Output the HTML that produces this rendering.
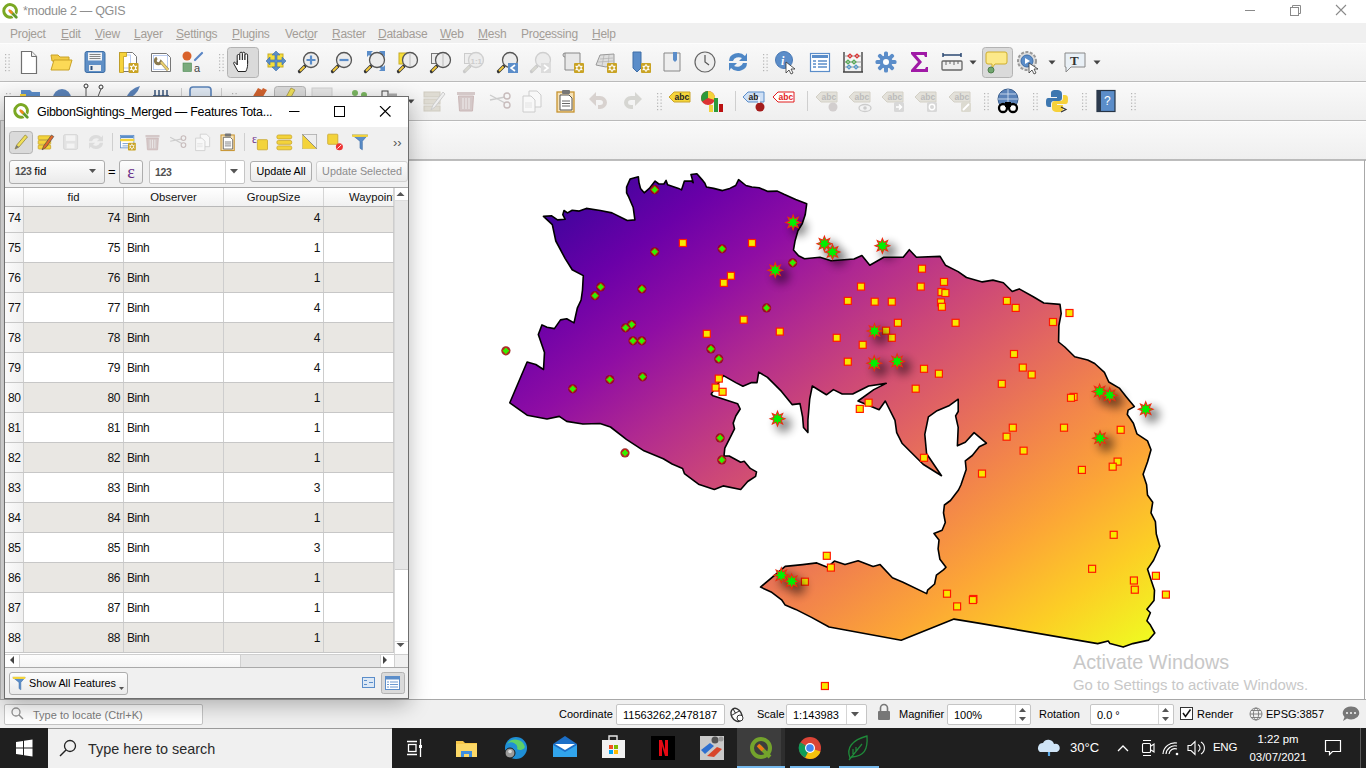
<!DOCTYPE html>
<html><head><meta charset="utf-8"><title>QGIS</title>
<style>
*{box-sizing:border-box;margin:0;padding:0}
html,body{width:1366px;height:768px;overflow:hidden;background:#fff;font-family:"Liberation Sans",sans-serif;font-size:12px;color:#000}
.abs{position:absolute}
#titlebar{position:absolute;left:0;top:0;width:1366px;height:23px;background:#fff}
#titletext{position:absolute;left:23px;top:4px;font-size:12.5px;color:#8f8f8f;white-space:nowrap;letter-spacing:-0.3px}
#menubar{position:absolute;left:0;top:23px;width:1366px;height:20px;background:#f0f0f0}
#menubar span{position:absolute;top:4px;font-size:12px;color:#a39d97;white-space:nowrap;letter-spacing:-0.25px}
#menubar u{text-decoration:underline;text-underline-offset:1px}
.tb{position:absolute;left:0;width:1366px;background:linear-gradient(#f9f9f9,#efefef);border-bottom:1px solid #bababa;border-top:1px solid #fdfdfd}
#tb1{top:43px;height:39px}
#tb2{top:82px;height:39px}
#tb3{top:121px;height:39px}
#map{position:absolute;left:0;top:160px;width:1366px;height:539px;background:#fff;overflow:hidden;border-top:1px solid #bdbdbd}
#status{position:absolute;left:0;top:699px;width:1366px;height:29px;background:#f0f0f0;border-top:1px solid #a8a8a8}
#status .lbl{position:absolute;top:8px;font-size:11px;color:#000;white-space:nowrap}
.inp{position:absolute;background:#fff;border:1px solid #c5c5c5;border-radius:2px;height:21px;font-size:11px;padding:4px 0 0 6px;white-space:nowrap}
#taskbar{position:absolute;left:0;top:728px;width:1366px;height:40px;background:#1f1f1f}
#tsearch{position:absolute;left:48px;top:0;width:344px;height:40px;background:#f0f0f0}
#tsearch span{position:absolute;left:40px;top:12.5px;font-size:14.4px;color:#2a2a2a;white-space:nowrap}
.ticon{position:absolute;top:8px;width:24px;height:24px}
.wm1{position:absolute;left:1073px;top:651px;font-size:19.8px;color:#c8c8c8;white-space:nowrap}
.wm2{position:absolute;left:1073px;top:677px;font-size:14.9px;color:#c8c8c8;white-space:nowrap}
/* dialog */
#dlgshadow{position:absolute;left:0;top:93px;width:424px;height:618px;box-shadow:0 6px 20px rgba(0,0,0,0.28);left:4px;top:96px;width:405px;height:603px}
#dlg{position:absolute;left:4px;top:96px;width:405px;height:603px;background:#f0f0f0;border:1px solid #6e6e6e;overflow:hidden}
#dlgtitle{position:absolute;left:0;top:0;width:403px;height:30px;background:#fff}
#dlgtitle .t{position:absolute;left:32px;top:8px;font-size:12.5px;color:#000;white-space:nowrap;letter-spacing:-0.29px}
#dlgtb{position:absolute;left:0;top:30px;width:403px;height:31px;background:#f0f0f0}
.btn{position:absolute;border:1px solid #adadad;border-radius:3px;background:linear-gradient(#fdfdfd,#eaeaea);font-size:10.8px;white-space:nowrap;text-align:center}
#table{position:absolute;left:0;top:90px;width:403px;height:481px;background:#fff;border-top:1px solid #a9a9a9;border-bottom:1px solid #a9a9a9;overflow:hidden}
#thead{position:absolute;left:0;top:0;width:389px;height:19px;background:linear-gradient(#ffffff,#f1f1f1);border-bottom:1px solid #b9b9b9;z-index:2}
#thead div{position:absolute;top:0;height:18px;border-right:1px solid #d5d5d5;font-size:11.3px;text-align:center;padding-top:3px;white-space:nowrap;overflow:hidden;color:#111}
.row{position:absolute;left:0;width:389px;height:30px;background:#fff;border-bottom:1px solid #c7c7c7}
.row.alt{background:#e9e7e3}
.row div{position:absolute;top:0;height:29px;border-right:1px solid #cdcdcd;font-size:12px;letter-spacing:-0.45px;padding-top:8.3px;white-space:nowrap;color:#111}
.row .vh{left:0;width:19px;background:linear-gradient(90deg,#fafafa,#f0f0f0);padding-left:3px}
.row .c1{left:19px;width:100px;text-align:right;padding-right:3px}
.row .c2{left:119px;width:100px;padding-left:3px}
.row .c3{left:219px;width:100px;text-align:right;padding-right:3px}
.row .c4{left:319px;width:70px}
#vscroll{position:absolute;left:389px;top:0;width:14px;height:466px;background:#fff;border-left:1px solid #d8d8d8;z-index:3}
#vthumb{position:absolute;left:0;top:13px;width:13px;height:369px;background:#e6e6e6;border-bottom:1px solid #cfcfcf}
#vup{position:absolute;left:0;top:0;width:13px;height:13px;background:#fff;border-bottom:1px solid #dcdcdc}
#vdown{position:absolute;left:0;top:453px;width:13px;height:13px;background:#fff;border-top:1px solid #dcdcdc}
#hscroll{position:absolute;left:0;top:466px;width:403px;height:14px;background:#e6e6e6;border-top:1px solid #cfcfcf;z-index:3}
#hthumb{position:absolute;left:14px;top:0;width:222px;height:13px;background:linear-gradient(#fdfdfd,#f3f3f3);border-right:1px solid #d0d0d0;border-left:1px solid #d0d0d0}
#hleft{position:absolute;left:0;top:0;width:14px;height:13px;background:#fff}
#hright{position:absolute;left:375px;top:0;width:14px;height:13px;background:#fff;border-left:1px solid #d0d0d0}
#hcorner{position:absolute;left:389px;top:0;width:14px;height:13px;background:#f0f0f0;border-left:1px solid #d0d0d0}
</style></head>
<body>
<div id="titlebar">
  <svg class="abs" style="left:2px;top:2.5px" width="17" height="17" viewBox="0 0 17 17"><path d="M13.2,11.6 A6.3,6.3 0 1 0 10.8,13.6" fill="none" stroke="#7aa823" stroke-width="2.9"/><path d="M8.2,8.2 L14.3,14.3" stroke="#fff" stroke-width="4.4" stroke-linecap="round"/><path d="M8.6,8.6 L14.3,14.3" stroke="#5f9a2c" stroke-width="2.8" stroke-linecap="round"/><path d="M7.6,7.6 L9.6,9.6" stroke="#f08a1c" stroke-width="2.6" stroke-linecap="round"/></svg>
  <div id="titletext">*module 2 — QGIS</div>
  <svg class="abs" style="left:1240px;top:4px" width="110" height="12" viewBox="0 0 110 12">
    <path d="M5 6.5 H15" stroke="#8a8a8a" stroke-width="1"/>
    <rect x="50.5" y="3.5" width="8" height="8" fill="none" stroke="#8a8a8a"/><path d="M52.5 3.5 V1.5 H60.5 V9.5 H58.5" fill="none" stroke="#8a8a8a"/>
    <path d="M96 1 L106 11 M106 1 L96 11" stroke="#8a8a8a" stroke-width="1.1"/>
  </svg>
</div>
<div id="menubar">
  <span style="left:10px">Pro<u>j</u>ect</span><span style="left:61px"><u>E</u>dit</span><span style="left:95px"><u>V</u>iew</span><span style="left:134px"><u>L</u>ayer</span><span style="left:176px"><u>S</u>ettings</span><span style="left:232px"><u>P</u>lugins</span><span style="left:285px">Vect<u>o</u>r</span><span style="left:332px"><u>R</u>aster</span><span style="left:378px"><u>D</u>atabase</span><span style="left:440px"><u>W</u>eb</span><span style="left:478px"><u>M</u>esh</span><span style="left:521px">Pro<u>c</u>essing</span><span style="left:592px"><u>H</u>elp</span>
</div>
<div id="tb1" class="tb"><!--TB1--></div>
<div id="tb2" class="tb"><!--TB2--></div>
<div id="tb3" class="tb"></div>
<svg width="1366" height="160" style="position:absolute;left:0;top:0"><rect x="5" y="54" width="1.2" height="1.2" fill="#b5b5b5"/><rect x="8.5" y="54" width="1.2" height="1.2" fill="#b5b5b5"/><rect x="5" y="57.2" width="1.2" height="1.2" fill="#b5b5b5"/><rect x="8.5" y="57.2" width="1.2" height="1.2" fill="#b5b5b5"/><rect x="5" y="60.4" width="1.2" height="1.2" fill="#b5b5b5"/><rect x="8.5" y="60.4" width="1.2" height="1.2" fill="#b5b5b5"/><rect x="5" y="63.6" width="1.2" height="1.2" fill="#b5b5b5"/><rect x="8.5" y="63.6" width="1.2" height="1.2" fill="#b5b5b5"/><rect x="5" y="66.8" width="1.2" height="1.2" fill="#b5b5b5"/><rect x="8.5" y="66.8" width="1.2" height="1.2" fill="#b5b5b5"/><rect x="5" y="70" width="1.2" height="1.2" fill="#b5b5b5"/><rect x="8.5" y="70" width="1.2" height="1.2" fill="#b5b5b5"/><g transform="translate(17,50)"><path d="M4.5,1.5 h10 l5,5 v17 h-15z" fill="#fff" stroke="#707070" stroke-width="1.2"/><path d="M14.5,1.5 v5 h5" fill="#eee" stroke="#707070"/></g><g transform="translate(49.5,50)"><path d="M1.5,5 h7 l2,2 h9 v4 h-17z" fill="#f2cb45" stroke="#c9a227"/><path d="M1.5,20 l3,-10 h18 l-3,10z" fill="#fcd956" stroke="#c9a227"/></g><g transform="translate(83,50)"><rect x="2" y="1.5" width="20" height="21" rx="2" fill="#5f8fc6" stroke="#3d6ea5"/><rect x="5" y="2.5" width="14" height="8" fill="#f2f4f6"/><path d="M6.5,4.5 h11 M6.5,6.5 h11 M6.5,8.5 h11" stroke="#555" stroke-width="0.7"/><rect x="6" y="15" width="12" height="6" fill="#eee"/><rect x="7.5" y="16" width="2" height="4" fill="#2d4f7a"/></g><g transform="translate(116,50)"><path d="M3.5,2.5 h13 l4,4 v15 h-17z" fill="#fff" stroke="#777"/><rect x="5.5" y="5" width="9" height="13" fill="#fff" stroke="#aac0ee" stroke-width="0.8"/><path d="M3.5,2.5 h7 v4 h-3 v16 h-4z" fill="#f6d33b" stroke="#c29c1c" stroke-width="0.8"/><rect x="12.5" y="13" width="10" height="10" rx="1" fill="#c9a324"/><path d="M17.5,14 v8 M14.05,16 l6.9,4 M20.95,16 l-6.9,4" stroke="#fff" stroke-width="1.1"/><circle cx="17.5" cy="18" r="2.2" fill="#c9a324" stroke="#fff" stroke-width="1.1"/></g><g transform="translate(149,50)"><path d="M2.5,3.5 h15 l4,4 v14 h-19z" fill="#fff" stroke="#777"/><rect x="4.5" y="5.5" width="14" height="14" fill="none" stroke="#aac0ee" stroke-width="0.8"/><path d="M8,8 a3,3 0 1 0 4,4 l7,8" fill="none" stroke="#8a7a50" stroke-width="3"/><path d="M12,12 l7,8" stroke="#e8cf70" stroke-width="2"/></g><g transform="translate(181,50)"><circle cx="6" cy="6" r="4.5" fill="#d9622b"/><path d="M14,10 L21,3" stroke="#5a86c5" stroke-width="2.2" stroke-linecap="round"/><rect x="2" y="13" width="8.5" height="8.5" fill="#7aaa7c" stroke="#4c8a53" stroke-width="0.6"/><text x="13" y="21.5" font-family="Liberation Sans" font-size="11" fill="#444">a</text></g><rect x="219" y="54" width="1.2" height="1.2" fill="#b5b5b5"/><rect x="222.5" y="54" width="1.2" height="1.2" fill="#b5b5b5"/><rect x="219" y="57.2" width="1.2" height="1.2" fill="#b5b5b5"/><rect x="222.5" y="57.2" width="1.2" height="1.2" fill="#b5b5b5"/><rect x="219" y="60.4" width="1.2" height="1.2" fill="#b5b5b5"/><rect x="222.5" y="60.4" width="1.2" height="1.2" fill="#b5b5b5"/><rect x="219" y="63.6" width="1.2" height="1.2" fill="#b5b5b5"/><rect x="222.5" y="63.6" width="1.2" height="1.2" fill="#b5b5b5"/><rect x="219" y="66.8" width="1.2" height="1.2" fill="#b5b5b5"/><rect x="222.5" y="66.8" width="1.2" height="1.2" fill="#b5b5b5"/><rect x="219" y="70" width="1.2" height="1.2" fill="#b5b5b5"/><rect x="222.5" y="70" width="1.2" height="1.2" fill="#b5b5b5"/><rect x="227.5" y="47.5" width="31" height="30" rx="3" fill="#dadada" stroke="#b3b3b3"/><g transform="translate(231,50)"><rect x="6.2" y="4.5" width="2.6" height="11" rx="1.3" fill="#fff" stroke="#222" stroke-width="1"/><rect x="8.8" y="2.2" width="2.6" height="12" rx="1.3" fill="#fff" stroke="#222" stroke-width="1"/><rect x="11.4" y="2.2" width="2.6" height="12" rx="1.3" fill="#fff" stroke="#222" stroke-width="1"/><rect x="14" y="3.8" width="2.6" height="10.5" rx="1.3" fill="#fff" stroke="#222" stroke-width="1"/><path d="M6.3,11 V15 L4.5,12.8 C3.5,11.6 2,12.3 2.8,13.8 L7,21.5 H14.8 C16,19 16.6,17 16.6,14.5 V11z" fill="#fff" stroke="#222" stroke-width="1" stroke-linejoin="round"/><rect x="7" y="10" width="9" height="5" fill="#fff"/></g><g transform="translate(264,50)"><rect x="4" y="4" width="15" height="13" fill="#f6de3a" stroke="#c8ac25"/><path d="M12,1 l4,4 h-3 v5 h5 v-3 l4,4 -4,4 v-3 h-5 v5 h3 l-4,4 -4,-4 h3 v-5 h-5 v3 l-4,-4 4,-4 v3 h5 v-5 h-3z" fill="#5b8dc9" stroke="#3e6ea8" stroke-width="0.6"/></g><g transform="translate(297,50)"><path d="M2.5,21.5 L8,16" stroke="#333" stroke-width="3.2" stroke-linecap="round"/><path d="M3,21 L7.5,16.5" stroke="#f3c93a" stroke-width="1.8"/><circle cx="14" cy="10" r="7.5" fill="#ececec" stroke="#555" stroke-width="1.3"/><path d="M14,5.5 v9 M9.5,10 h9" stroke="#5b8dc9" stroke-width="2.2"/></g><g transform="translate(330,50)"><path d="M2.5,21.5 L8,16" stroke="#333" stroke-width="3.2" stroke-linecap="round"/><path d="M3,21 L7.5,16.5" stroke="#f3c93a" stroke-width="1.8"/><circle cx="14" cy="10" r="7.5" fill="#ececec" stroke="#555" stroke-width="1.3"/><path d="M9.5,10 h9" stroke="#5b8dc9" stroke-width="2.2"/></g><g transform="translate(363,50)"><path d="M4,1 h6 l-2,2 3,3 -2,2 -3,-3 -2,2z M22,1 h-6 l2,2 -3,3 2,2 3,-3 2,2z M22,21 h-6 l2,-2 -3,-3 2,-2 3,3 2,-2z" fill="#5b8dc9"/><path d="M2.5,21.5 L8,16" stroke="#333" stroke-width="3.2" stroke-linecap="round"/><path d="M3,21 L7.5,16.5" stroke="#f3c93a" stroke-width="1.8"/><circle cx="14" cy="10" r="7.5" fill="#ececec" stroke="#555" stroke-width="1.3"/></g><g transform="translate(396,50)"><rect x="3" y="3" width="9" height="11" fill="#f6de3a" stroke="#c8ac25"/><path d="M2.5,21.5 L8,16" stroke="#333" stroke-width="3.2" stroke-linecap="round"/><path d="M3,21 L7.5,16.5" stroke="#f3c93a" stroke-width="1.8"/><circle cx="14" cy="10" r="7.5" fill="#ececec" stroke="#555" stroke-width="1.3"/><path d="M14,3 v14" stroke="#bbb"/></g><g transform="translate(429,50)"><rect x="2.5" y="3.5" width="9" height="10" fill="#eee" stroke="#777"/><path d="M2.5,21.5 L8,16" stroke="#333" stroke-width="3.2" stroke-linecap="round"/><path d="M3,21 L7.5,16.5" stroke="#f3c93a" stroke-width="1.8"/><circle cx="14" cy="10" r="7.5" fill="#ececec" stroke="#555" stroke-width="1.3"/><path d="M14,3 v14" stroke="#bbb"/></g><g transform="translate(462,50)"><rect x="2.5" y="3.5" width="9" height="10" fill="#eee" stroke="#ccc"/><path d="M2.5,21.5 L8,16" stroke="#c9c9c9" stroke-width="3.2" stroke-linecap="round"/><path d="M3,21 L7.5,16.5" stroke="#d8d8d0" stroke-width="1.8"/><circle cx="14" cy="10" r="7.5" fill="#ececec" stroke="#cfcfcf" stroke-width="1.3"/><text x="8.5" y="13.5" font-size="8" font-family="Liberation Sans" font-weight="bold" fill="#ccc">1:1</text></g><g transform="translate(496,50)"><path d="M2.5,21.5 L8,16" stroke="#333" stroke-width="3.2" stroke-linecap="round"/><path d="M3,21 L7.5,16.5" stroke="#f3c93a" stroke-width="1.8"/><circle cx="14" cy="10" r="7.5" fill="#ececec" stroke="#555" stroke-width="1.3"/><rect x="12" y="13" width="10" height="10" fill="#5b8dc9"/><path d="M19,15 l-4,3 4,3" fill="none" stroke="#fff" stroke-width="1.6"/></g><g transform="translate(529,50)"><path d="M2.5,21.5 L8,16" stroke="#c9c9c9" stroke-width="3.2" stroke-linecap="round"/><path d="M3,21 L7.5,16.5" stroke="#d8d8d0" stroke-width="1.8"/><circle cx="14" cy="10" r="7.5" fill="#ececec" stroke="#cfcfcf" stroke-width="1.3"/><rect x="12" y="13" width="10" height="10" fill="#dcdcdc"/><path d="M15,15 l4,3 -4,3" fill="none" stroke="#fff" stroke-width="1.6"/></g><g transform="translate(561,50)"><path d="M4,3 h15 v17 h-15z" fill="#e8e8e8" stroke="#888"/><path d="M4,3 a2,2 0 0 0 0,4" fill="none" stroke="#888"/><rect x="13" y="13" width="10" height="10" rx="1" fill="#c9a324"/><path d="M18,14 v8 M14.55,16 l6.9,4 M21.45,16 l-6.9,4" stroke="#fff" stroke-width="1.1"/><circle cx="18" cy="18" r="2.2" fill="#c9a324" stroke="#fff" stroke-width="1.1"/></g><g transform="translate(594,50)"><path d="M2,15 L6,5 L20,4 L20,14 L12,17z" fill="#dedede" stroke="#999"/><path d="M6,9 l13,-1 M4,12 l15,-1 M10,5 l-2,11 M15,5 l-1,11" stroke="#aaa" stroke-width="0.6"/><rect x="13" y="13" width="10" height="10" rx="1" fill="#c9a324"/><path d="M18,14 v8 M14.55,16 l6.9,4 M21.45,16 l-6.9,4" stroke="#fff" stroke-width="1.1"/><circle cx="18" cy="18" r="2.2" fill="#c9a324" stroke="#fff" stroke-width="1.1"/></g><g transform="translate(628,50)"><path d="M5,2 h8 v16 l-4,4 -4,-4z" fill="#5b8dc9" stroke="#3e6ea8"/><rect x="13" y="13" width="10" height="10" rx="1" fill="#c9a324"/><path d="M18,14 v8 M14.55,16 l6.9,4 M21.45,16 l-6.9,4" stroke="#fff" stroke-width="1.1"/><circle cx="18" cy="18" r="2.2" fill="#c9a324" stroke="#fff" stroke-width="1.1"/></g><g transform="translate(660,50)"><path d="M4,3 h16 v18 h-16z" fill="#eee" stroke="#888"/><path d="M13,2 h4 v8 l-2,2 -2,-2z" fill="#5b8dc9"/></g><g transform="translate(693,50)"><circle cx="12" cy="12" r="10" fill="#eee" stroke="#666" stroke-width="1.2"/><path d="M12,5 v7 l4,3" fill="none" stroke="#555" stroke-width="1.2"/></g><g transform="translate(726,50)"><path d="M3,11 A9,8 0 0 1 19,6 L21,3 V11 H13 L16,8 A6,5 0 0 0 7,11z M21,13 A9,8 0 0 1 5,18 L3,21 V13 H11 L8,16 A6,5 0 0 0 17,13z" fill="#4e87c6"/></g><rect x="763" y="54" width="1.2" height="1.2" fill="#b5b5b5"/><rect x="766.5" y="54" width="1.2" height="1.2" fill="#b5b5b5"/><rect x="763" y="57.2" width="1.2" height="1.2" fill="#b5b5b5"/><rect x="766.5" y="57.2" width="1.2" height="1.2" fill="#b5b5b5"/><rect x="763" y="60.4" width="1.2" height="1.2" fill="#b5b5b5"/><rect x="766.5" y="60.4" width="1.2" height="1.2" fill="#b5b5b5"/><rect x="763" y="63.6" width="1.2" height="1.2" fill="#b5b5b5"/><rect x="766.5" y="63.6" width="1.2" height="1.2" fill="#b5b5b5"/><rect x="763" y="66.8" width="1.2" height="1.2" fill="#b5b5b5"/><rect x="766.5" y="66.8" width="1.2" height="1.2" fill="#b5b5b5"/><rect x="763" y="70" width="1.2" height="1.2" fill="#b5b5b5"/><rect x="766.5" y="70" width="1.2" height="1.2" fill="#b5b5b5"/><g transform="translate(774,50)"><circle cx="10" cy="10" r="8.5" fill="#5b8dc9" stroke="#4a7ab5"/><text x="7" y="15" font-family="Liberation Serif" font-style="italic" font-weight="bold" font-size="12" fill="#fff">i</text><path d="M12,12 v11 l3,-3 2,4 2,-1 -2,-4 h4z" fill="#fff" stroke="#333" stroke-width="0.8"/></g><g transform="translate(808,50)"><rect x="2.5" y="3.5" width="19" height="18" fill="#fff" stroke="#5b8dc9" stroke-width="1.2"/><rect x="4" y="5" width="16" height="3" fill="#5b8dc9"/><path d="M5,11 h3 M10,11 h9 M5,14 h3 M10,14 h9 M5,17 h3 M10,17 h9" stroke="#5b8dc9" stroke-width="1.3"/></g><g transform="translate(841,50)"><path d="M3,2 v20 M21,2 v20 M2,22 h20" stroke="#444" stroke-width="1.4"/><path d="M3,6 h18 M3,12 h18 M3,17 h18" stroke="#888" stroke-width="0.8"/><g fill="none" stroke-width="1.2"><path d="M7,6 l2,-2 2,2 -2,2z M14,6 l2,-2 2,2 -2,2z" stroke="#d33"/><path d="M5,12 l2,-2 2,2 -2,2z M11,12 l2,-2 2,2 -2,2z" stroke="#5a5"/><path d="M6,17 l2,-2 2,2 -2,2z M13,17 l2,-2 2,2 -2,2z" stroke="#59c"/></g></g><g transform="translate(874,50)"><g fill="#5b8dc9"><circle cx="12" cy="12" r="6.5"/><rect x="10" y="1.5" width="4" height="21" rx="1.5"/><rect x="1.5" y="10" width="21" height="4" rx="1.5"/><rect x="10" y="1.5" width="4" height="21" rx="1.5" transform="rotate(45 12 12)"/><rect x="10" y="1.5" width="4" height="21" rx="1.5" transform="rotate(-45 12 12)"/></g><circle cx="12" cy="12" r="3" fill="#fff"/></g><g transform="translate(907,50)"><path d="M4,2 h16 v5 h-2 l-1,-2 h-8 l6,7 -6,7 h9 l1,-2 h2 v5 h-17 v-2 l7,-8 -7,-8z" fill="#a01aa6"/></g><g transform="translate(940,50)"><path d="M3,5 h18 M3,3 v4 M21,3 v4" stroke="#2c4a73" stroke-width="1.5"/><rect x="2" y="11" width="20" height="9" rx="1" fill="#eee" stroke="#666" stroke-width="1.3"/><path d="M6,11 v4 M10,11 v3 M14,11 v4 M18,11 v3" stroke="#666"/></g><path d="M969.5,60.5 h7 l-3.5,4z" fill="#444"/><rect x="982.5" y="47.5" width="30" height="30" rx="3" fill="#dadada" stroke="#b3b3b3"/><g transform="translate(985,50)"><path d="M3,2 h17 a2,2 0 0 1 2,2 v8 a2,2 0 0 1 -2,2 h-10 l-3,4 v-4 h-4 a2,2 0 0 1 -2,-2 v-8 a2,2 0 0 1 2,-2z" fill="#fce98a" stroke="#cfae2c"/><circle cx="6" cy="20" r="3" fill="#72a66f" stroke="#4d7f4b"/></g><g transform="translate(1016,50)"><circle cx="11" cy="11" r="9" fill="#ddd" stroke="#999" stroke-dasharray="3 1.5" stroke-width="2"/><circle cx="11" cy="11" r="6" fill="#5b8dc9" stroke="#3e6ea8"/><path d="M9,8 l5,3 -5,3z" fill="#fff"/><path d="M13,13 v10 l3,-3 2,4 2,-1 -2,-4 h4z" fill="#fff" stroke="#333" stroke-width="0.8"/></g><path d="M1048.5,60.5 h7 l-3.5,4z" fill="#444"/><g transform="translate(1063,50)"><path d="M2,3 h20 v14 h-14 l-5,5 v-5 h-1z" fill="#e9f0f6" stroke="#888"/><text x="7" y="14.5" font-family="Liberation Serif" font-weight="bold" font-size="13" fill="#333">T</text></g><path d="M1093.5,60.5 h7 l-3.5,4z" fill="#444"/><rect x="6" y="93" width="1.2" height="1.2" fill="#b5b5b5"/><rect x="9.5" y="93" width="1.2" height="1.2" fill="#b5b5b5"/><rect x="6" y="96.2" width="1.2" height="1.2" fill="#b5b5b5"/><rect x="9.5" y="96.2" width="1.2" height="1.2" fill="#b5b5b5"/><rect x="6" y="99.4" width="1.2" height="1.2" fill="#b5b5b5"/><rect x="9.5" y="99.4" width="1.2" height="1.2" fill="#b5b5b5"/><rect x="6" y="102.6" width="1.2" height="1.2" fill="#b5b5b5"/><rect x="9.5" y="102.6" width="1.2" height="1.2" fill="#b5b5b5"/><rect x="6" y="105.8" width="1.2" height="1.2" fill="#b5b5b5"/><rect x="9.5" y="105.8" width="1.2" height="1.2" fill="#b5b5b5"/><rect x="6" y="109" width="1.2" height="1.2" fill="#b5b5b5"/><rect x="9.5" y="109" width="1.2" height="1.2" fill="#b5b5b5"/><path d="M21,90 h9 l2,2 h8 v12 h-19z" fill="#5b8dc9"/><rect x="20" y="94" width="6" height="8" fill="#f3d33a"/><circle cx="62" cy="98" r="9" fill="#5a82b8"/><circle cx="86" cy="86" r="2" fill="none" stroke="#333"/><circle cx="101" cy="87" r="2" fill="none" stroke="#333"/><path d="M86,88 v10 M101,89 l-4,10" stroke="#555"/><path d="M125,100 q5,-12 15,-14 q-3,10 -15,14z" fill="#5a82b8"/><path d="M153,96 h16 M155,90 v6 M159,90 v6 M163,90 v6 M167,90 v6" stroke="#2c4a73" stroke-width="1.4"/><rect x="181" y="88" width="1" height="26" fill="#cfcfcf"/><rect x="190" y="87" width="21" height="12" rx="3" fill="#dfe8f3" stroke="#5a82b8" stroke-width="1.6"/><rect x="221" y="88" width="1" height="26" fill="#cfcfcf"/><rect x="232" y="93" width="1.2" height="1.2" fill="#b5b5b5"/><rect x="235.5" y="93" width="1.2" height="1.2" fill="#b5b5b5"/><rect x="232" y="96.2" width="1.2" height="1.2" fill="#b5b5b5"/><rect x="235.5" y="96.2" width="1.2" height="1.2" fill="#b5b5b5"/><rect x="232" y="99.4" width="1.2" height="1.2" fill="#b5b5b5"/><rect x="235.5" y="99.4" width="1.2" height="1.2" fill="#b5b5b5"/><rect x="232" y="102.6" width="1.2" height="1.2" fill="#b5b5b5"/><rect x="235.5" y="102.6" width="1.2" height="1.2" fill="#b5b5b5"/><rect x="232" y="105.8" width="1.2" height="1.2" fill="#b5b5b5"/><rect x="235.5" y="105.8" width="1.2" height="1.2" fill="#b5b5b5"/><rect x="232" y="109" width="1.2" height="1.2" fill="#b5b5b5"/><rect x="235.5" y="109" width="1.2" height="1.2" fill="#b5b5b5"/><path d="M252,98 l6,-10 4,2 -6,10z M257,98 l6,-10 4,2 -6,10z" fill="#d2632f"/><rect x="274.5" y="86.5" width="31" height="29" rx="3" fill="#dadada" stroke="#b3b3b3"/><path d="M286,97 l5,-9 4,2 -5,9z" fill="#f0e05a" stroke="#9a8a40" stroke-width="0.7"/><rect x="312" y="88" width="20" height="10" fill="#e6e6e6" stroke="#d0d0d0"/><circle cx="355" cy="93" r="3" fill="#7bb661"/><circle cx="364" cy="95" r="3" fill="#7bb661"/><rect x="382" y="91" width="6" height="6" fill="none" stroke="#444"/><path d="M389,95 h8" stroke="#aaa" stroke-width="3"/><path d="M407.5,99.5 h7 l-3.5,4z" fill="#444"/><g transform="translate(422,89)"><rect x="2" y="3" width="16" height="5" fill="#dedbd2" stroke="#cfcbc0"/><rect x="2" y="10" width="16" height="5" fill="#dedbd2" stroke="#cfcbc0"/><rect x="2" y="17" width="16" height="5" fill="#dedbd2" stroke="#cfcbc0"/><path d="M9,21 l2,-5 10,-13 2,2 -10,13z" fill="#eee" stroke="#ccc"/></g><g transform="translate(454,89)"><rect x="3" y="3" width="18" height="3" fill="#d4c8c8"/><path d="M4.5,7 h15 l-1,15 h-13z" fill="#d4c8c8" stroke="#cbb7b7"/><path d="M9,9 v11 M12,9 v11 M15,9 v11" stroke="#f0eeee"/></g><g transform="translate(488,89)"><path d="M2,6 L17,14 M2,11 L17,8" stroke="#ccc" stroke-width="1.4"/><circle cx="19" cy="7" r="3" fill="none" stroke="#c8bcbc" stroke-width="1.4"/><circle cx="19" cy="16" r="3" fill="none" stroke="#c8bcbc" stroke-width="1.4"/></g><g transform="translate(520,89)"><path d="M9,2 h8 l4,4 v12 h-12z" fill="#f8f8f8" stroke="#ccc"/><path d="M3,7 h8 l4,4 v12 h-12z" fill="#f8f8f8" stroke="#ccc"/><path d="M5,14 h7 M5,16 h7 M5,18 h7" stroke="#ddd" stroke-width="0.8"/></g><g transform="translate(554,89)"><rect x="3" y="3" width="17" height="20" fill="#f6e2b7" stroke="#c6932f" stroke-width="1.3"/><rect x="8" y="1" width="8" height="4" rx="1" fill="#777"/><path d="M6,6 h9 l3,3 v12 h-12z" fill="#fff" stroke="#555"/><path d="M8,12 h8 M8,14.5 h8 M8,17 h8" stroke="#555" stroke-width="0.9"/></g><g transform="translate(587,89)"><path d="M2,10 L9,3 V7 H13 A7,6.5 0 0 1 13,20 H11 V16 H13 A3,2.5 0 0 0 13,11 H9 V17z" fill="#d8d2cf"/></g><g transform="translate(620,89)"><path d="M22,10 L15,3 V7 H11 A7,6.5 0 0 0 11,20 H13 V16 H11 A3,2.5 0 0 1 11,11 H15 V17z" fill="#d6d6d2"/></g><rect x="657" y="93" width="1.2" height="1.2" fill="#b5b5b5"/><rect x="660.5" y="93" width="1.2" height="1.2" fill="#b5b5b5"/><rect x="657" y="96.2" width="1.2" height="1.2" fill="#b5b5b5"/><rect x="660.5" y="96.2" width="1.2" height="1.2" fill="#b5b5b5"/><rect x="657" y="99.4" width="1.2" height="1.2" fill="#b5b5b5"/><rect x="660.5" y="99.4" width="1.2" height="1.2" fill="#b5b5b5"/><rect x="657" y="102.6" width="1.2" height="1.2" fill="#b5b5b5"/><rect x="660.5" y="102.6" width="1.2" height="1.2" fill="#b5b5b5"/><rect x="657" y="105.8" width="1.2" height="1.2" fill="#b5b5b5"/><rect x="660.5" y="105.8" width="1.2" height="1.2" fill="#b5b5b5"/><rect x="657" y="109" width="1.2" height="1.2" fill="#b5b5b5"/><rect x="660.5" y="109" width="1.2" height="1.2" fill="#b5b5b5"/><g transform="translate(668,89)"><path d="M1,8 l5,-5 h16 v10 h-16z" fill="#f6d53a" stroke="#c9a42a"/><text x="6.5" y="11" font-family="Liberation Sans" font-weight="bold" font-size="8.5" fill="#222">abc</text></g><g transform="translate(700,89)"><circle cx="8" cy="9" r="7" fill="#d33"/><path d="M8,9 L8,2 A7,7 0 0 1 14.7,11z" fill="#f3d33a"/><path d="M8,9 L2,12.5 A7,7 0 0 1 8,2z" fill="#2e9a3a"/><rect x="9" y="16" width="4" height="7" fill="#f3d33a"/><rect x="14" y="9" width="4" height="14" fill="#2e9a3a"/><rect x="19" y="15" width="4" height="8" fill="#b11"/></g><rect x="735" y="91" width="1" height="20" fill="#cfcfcf"/><g transform="translate(742,89)"><path d="M1,8 l5,-5 h16 v10 h-16z" fill="#cfe0f5" stroke="#5b8dc9"/><text x="6.5" y="11" font-family="Liberation Sans" font-weight="bold" font-size="8.5" fill="#222">ab</text><circle cx="18" cy="18" r="4.5" fill="#a41c1c"/><path d="M17,14 v-6" stroke="#fff" stroke-width="1.5"/></g><g transform="translate(772,89)"><path d="M1,8 l5,-5 h16 v10 h-16z" fill="#fff" stroke="#e21d1d"/><text x="6.5" y="11" font-family="Liberation Sans" font-weight="bold" font-size="8.5" fill="#e21d1d">abc</text></g><rect x="807" y="91" width="1" height="20" fill="#cfcfcf"/><g transform="translate(815,89)"><path d="M1,8 l5,-5 h16 v10 h-16z" fill="#e3e1da" stroke="#d3d0c6"/><text x="6.5" y="11" font-family="Liberation Sans" font-weight="bold" font-size="8.5" fill="#bbb">abc</text><circle cx="18" cy="18" r="4.5" fill="#d2cece"/></g><g transform="translate(848,89)"><path d="M1,8 l5,-5 h16 v10 h-16z" fill="#e3e1da" stroke="#d3d0c6"/><text x="6.5" y="11" font-family="Liberation Sans" font-weight="bold" font-size="8.5" fill="#bbb">abc</text><ellipse cx="17" cy="19" rx="6" ry="3.5" fill="none" stroke="#ccc" stroke-width="1.3"/><circle cx="17" cy="19" r="1.8" fill="#ccc"/></g><g transform="translate(881,89)"><path d="M1,8 l5,-5 h16 v10 h-16z" fill="#e3e1da" stroke="#d3d0c6"/><text x="6.5" y="11" font-family="Liberation Sans" font-weight="bold" font-size="8.5" fill="#bbb">abc</text><rect x="13" y="13" width="10" height="10" rx="1.5" fill="#d8d8d8"/><path d="M15,18 h5 M18,15.5 l2.5,2.5 -2.5,2.5" stroke="#fff" stroke-width="1.5" fill="none"/></g><g transform="translate(914,89)"><path d="M1,8 l5,-5 h16 v10 h-16z" fill="#e3e1da" stroke="#d3d0c6"/><text x="6.5" y="11" font-family="Liberation Sans" font-weight="bold" font-size="8.5" fill="#bbb">abc</text><rect x="13" y="13" width="10" height="10" rx="1.5" fill="#d8d8d8"/><circle cx="18" cy="18" r="2.7" fill="none" stroke="#fff" stroke-width="1.4"/></g><g transform="translate(948,89)"><path d="M1,8 l5,-5 h16 v10 h-16z" fill="#e3e1da" stroke="#d3d0c6"/><text x="6.5" y="11" font-family="Liberation Sans" font-weight="bold" font-size="8.5" fill="#bbb">abc</text><rect x="13" y="13" width="10" height="10" rx="1.5" fill="#dcdad0"/><path d="M15,21 l6,-6" stroke="#fff" stroke-width="1.8"/></g><rect x="984" y="93" width="1.2" height="1.2" fill="#b5b5b5"/><rect x="987.5" y="93" width="1.2" height="1.2" fill="#b5b5b5"/><rect x="984" y="96.2" width="1.2" height="1.2" fill="#b5b5b5"/><rect x="987.5" y="96.2" width="1.2" height="1.2" fill="#b5b5b5"/><rect x="984" y="99.4" width="1.2" height="1.2" fill="#b5b5b5"/><rect x="987.5" y="99.4" width="1.2" height="1.2" fill="#b5b5b5"/><rect x="984" y="102.6" width="1.2" height="1.2" fill="#b5b5b5"/><rect x="987.5" y="102.6" width="1.2" height="1.2" fill="#b5b5b5"/><rect x="984" y="105.8" width="1.2" height="1.2" fill="#b5b5b5"/><rect x="987.5" y="105.8" width="1.2" height="1.2" fill="#b5b5b5"/><rect x="984" y="109" width="1.2" height="1.2" fill="#b5b5b5"/><rect x="987.5" y="109" width="1.2" height="1.2" fill="#b5b5b5"/><g transform="translate(996,89)"><circle cx="12" cy="10" r="10" fill="#5a82b8" stroke="#3b5f8e"/><path d="M2,10 h20 M12,0 v20 M4,5 h16 M4,15 h16" stroke="#cfdcee" stroke-width="0.9"/><circle cx="7" cy="19" r="4" fill="#fff" stroke="#000" stroke-width="2.3"/><circle cx="17" cy="19" r="4" fill="#fff" stroke="#000" stroke-width="2.3"/><rect x="9" y="13" width="6" height="5" fill="#000"/></g><rect x="1033" y="93" width="1.2" height="1.2" fill="#b5b5b5"/><rect x="1036.5" y="93" width="1.2" height="1.2" fill="#b5b5b5"/><rect x="1033" y="96.2" width="1.2" height="1.2" fill="#b5b5b5"/><rect x="1036.5" y="96.2" width="1.2" height="1.2" fill="#b5b5b5"/><rect x="1033" y="99.4" width="1.2" height="1.2" fill="#b5b5b5"/><rect x="1036.5" y="99.4" width="1.2" height="1.2" fill="#b5b5b5"/><rect x="1033" y="102.6" width="1.2" height="1.2" fill="#b5b5b5"/><rect x="1036.5" y="102.6" width="1.2" height="1.2" fill="#b5b5b5"/><rect x="1033" y="105.8" width="1.2" height="1.2" fill="#b5b5b5"/><rect x="1036.5" y="105.8" width="1.2" height="1.2" fill="#b5b5b5"/><rect x="1033" y="109" width="1.2" height="1.2" fill="#b5b5b5"/><rect x="1036.5" y="109" width="1.2" height="1.2" fill="#b5b5b5"/><g transform="translate(1045,89)"><path d="M11,1 C6,1 6,3 6,5 V8 H12 V9 H3 C1,9 1,12 1,14 C1,17 2,18 4,18 H6 V15 C6,13 7,12 9,12 H14 C16,12 17,11 17,9 V5 C17,3 16,1 11,1z" fill="#3d77b0"/><path d="M13,23 C18,23 18,21 18,19 V16 H12 V15 H21 C23,15 23,12 23,10 C23,7 22,6 20,6 H18 V9 C18,11 17,12 15,12 H10 C8,12 7,13 7,15 V19 C7,21 8,23 13,23z" fill="#f6d13a"/><path d="M16,18 l5,2.5 -5,2.5" fill="none" stroke="#333" stroke-width="1.2"/></g><rect x="1082" y="93" width="1.2" height="1.2" fill="#b5b5b5"/><rect x="1085.5" y="93" width="1.2" height="1.2" fill="#b5b5b5"/><rect x="1082" y="96.2" width="1.2" height="1.2" fill="#b5b5b5"/><rect x="1085.5" y="96.2" width="1.2" height="1.2" fill="#b5b5b5"/><rect x="1082" y="99.4" width="1.2" height="1.2" fill="#b5b5b5"/><rect x="1085.5" y="99.4" width="1.2" height="1.2" fill="#b5b5b5"/><rect x="1082" y="102.6" width="1.2" height="1.2" fill="#b5b5b5"/><rect x="1085.5" y="102.6" width="1.2" height="1.2" fill="#b5b5b5"/><rect x="1082" y="105.8" width="1.2" height="1.2" fill="#b5b5b5"/><rect x="1085.5" y="105.8" width="1.2" height="1.2" fill="#b5b5b5"/><rect x="1082" y="109" width="1.2" height="1.2" fill="#b5b5b5"/><rect x="1085.5" y="109" width="1.2" height="1.2" fill="#b5b5b5"/><g transform="translate(1094,89)"><rect x="3" y="1.5" width="18" height="21" fill="#5b8dc9" stroke="#263445" stroke-width="1.2"/><rect x="3" y="1.5" width="4" height="21" fill="#2c3a4d"/><text x="10" y="16" font-family="Liberation Sans" font-size="12" fill="#fff">?</text></g><rect x="1131" y="93" width="1.2" height="1.2" fill="#b5b5b5"/><rect x="1134.5" y="93" width="1.2" height="1.2" fill="#b5b5b5"/><rect x="1131" y="96.2" width="1.2" height="1.2" fill="#b5b5b5"/><rect x="1134.5" y="96.2" width="1.2" height="1.2" fill="#b5b5b5"/><rect x="1131" y="99.4" width="1.2" height="1.2" fill="#b5b5b5"/><rect x="1134.5" y="99.4" width="1.2" height="1.2" fill="#b5b5b5"/><rect x="1131" y="102.6" width="1.2" height="1.2" fill="#b5b5b5"/><rect x="1134.5" y="102.6" width="1.2" height="1.2" fill="#b5b5b5"/><rect x="1131" y="105.8" width="1.2" height="1.2" fill="#b5b5b5"/><rect x="1134.5" y="105.8" width="1.2" height="1.2" fill="#b5b5b5"/><rect x="1131" y="109" width="1.2" height="1.2" fill="#b5b5b5"/><rect x="1134.5" y="109" width="1.2" height="1.2" fill="#b5b5b5"/></svg>
<div id="map"></div>
<svg id="mapsvg" width="1366" height="540" viewBox="0 160 1366 540" style="position:absolute;left:0;top:160px">
<defs><linearGradient id="plasma" gradientUnits="userSpaceOnUse" x1="248.3" y1="337.8" x2="708.5" y2="963.7"><stop offset="0" stop-color="#0d0887"/><stop offset="0.1" stop-color="#41049d"/><stop offset="0.2" stop-color="#6a00a8"/><stop offset="0.3" stop-color="#8f0da4"/><stop offset="0.4" stop-color="#b12a90"/><stop offset="0.5" stop-color="#cc4778"/><stop offset="0.6" stop-color="#e16462"/><stop offset="0.7" stop-color="#f2844b"/><stop offset="0.8" stop-color="#fca636"/><stop offset="0.9" stop-color="#fcce25"/><stop offset="1" stop-color="#f0f921"/></linearGradient><filter id="sh" x="-100%" y="-100%" width="300%" height="300%"><feGaussianBlur stdDeviation="4.8"/></filter></defs>
<path d="M509.8,402.8 527.1,362 535.8,364.5 543.5,369.5 544.5,352.4 538.3,334.5 542,324.9 547,327.3 554.4,328.6 560.5,319.9 566.7,318.7 574,322.9 577.3,308.2 581.1,300 582.5,290 583.3,275.6 572.2,269.7 565.2,258.6 555.8,241 552.3,224.6 543.5,216.4 551.7,215.8 557.5,219.9 565.2,219.3 562.8,214.6 564,210.5 567.5,212.9 572.2,210.3 579.2,211.1 586.3,208.4 600.3,210.5 612,212.9 627.3,220.5 634.9,219.9 633.2,207.5 628.8,197.2 626.6,192.8 626.6,187 630.2,178.9 638.3,176.7 639,182.6 640.5,188.4 644.2,192.8 649.3,188.4 655.1,181.1 658.8,184 663.9,184 666.1,180.4 667.6,184.8 678.6,188.4 681.5,189.9 684.4,181.1 691.7,181.1 693.2,182.6 691,174.5 696.9,173.8 702,179.6 704.9,183.3 706.4,187 713.7,188.4 722.5,190.6 729.8,188.4 735.7,185.5 738.6,179.6 745.9,185.5 751.8,187 759.1,187.7 767.9,191.4 777.4,191.1 784,194.3 795.7,199.4 806.7,203.8 805.2,214.8 802.3,223.6 797.9,230.9 795,241.1 793.5,249.9 798.6,255.8 804.5,258.7 820,257.2 831.1,260.8 854,259 861.9,255.5 869.8,265.2 883.8,257.3 903.2,257.3 909.3,249.7 916.4,257.3 940.1,256.4 945.4,265.2 958.1,271.6 966.5,277.5 982.3,281.9 992.9,280.1 1003.4,282.7 1012.2,291.5 1019.2,288.9 1033.3,296.8 1043.8,303 1060,304.4 1061.2,313.7 1058.9,325.5 1058.6,342 1064.8,347 1074.7,356.8 1087.7,360 1094.7,363.5 1104.4,372.3 1108.8,382 1119.3,388.1 1126.4,396.9 1134.3,406.6 1128.1,410.1 1127.3,414.5 1133.4,423.3 1136.9,433.8 1147.5,440.9 1151,449.7 1147.5,462 1143.1,474.3 1146.6,484.8 1147.5,495 1152.7,502.3 1151,512.9 1155.4,521.6 1156.3,534 1159.8,546.3 1153.6,560.3 1147.5,569.1 1151,579.7 1154.5,590.2 1154,600.5 1146.9,609.3 1150.4,612.8 1146.9,620.7 1150.4,625.1 1154.8,633 1148.7,640.1 1132.8,643.6 1123.2,647.1 1110,643.6 1108.2,641 1097.7,643.6 980,623.4 954,619.1 901.2,640.2 829.1,627 811.5,617.4 795.7,609.4 785.2,605.1 781.6,599.8 771.1,591.9 760.5,587.1 785.2,566.4 802.7,564.6 816.8,562.9 827.4,567.3 834.4,561.1 845,564.6 858.1,560.7 873.1,566.4 880.1,564.6 892.4,577.8 903,582.2 926.7,593.6 927.6,590.1 934.6,584 936.4,575.2 943.4,569.9 946,567.3 939.9,559.3 938.1,548.8 939,540 934,533.5 942.1,530.3 945.3,522.5 943.5,512.9 944.4,505 950.5,500.5 958.5,490 960.9,485 966.2,469.6 965.3,460.8 972.3,455.5 979.3,446.7 986.4,443.2 974.1,432.6 965.3,442.3 957.4,445.8 958.2,427.4 955.6,415.9 958.2,411.5 958.2,399.2 949.5,405.4 937.1,410.7 928.4,416.8 924.8,434.4 926.6,453.7 941.5,475.7 923.1,464.3 914.3,455.5 902,443.2 896.7,432.6 895,420.3 885.3,401 879.1,409.8 858,401 873.8,389.6 886.2,383.4 868.6,386 852.7,394 842.2,394 833.4,389.6 826.4,394.8 812.3,386 809.7,399.2 807.9,420.3 807.9,432.6 803.5,427.4 802.6,416.8 800,403.6 792.1,404.6 781.5,391.4 767.5,377.4 758.7,372.1 757,382.6 751.6,382.6 742.9,386.2 735.8,382.6 723.5,375.6 711.2,394.1 713,395.8 737.6,403.7 740.2,409 735.8,416 733.2,423.1 734.5,428.8 731,435.8 724.8,448.1 724,456 729.2,456 740.7,462.2 744.2,461.3 750.3,468.4 756.5,471.9 755.6,476.3 747.7,481.5 740.7,489.5 723.1,485.9 714.3,489.5 698.5,484.2 684.4,473.6 682.6,468.4 672.1,464 663.3,458.7 644,450.8 626.4,439.3 610.5,427 600,423.5 582.9,424 566.7,421.4 559.3,416.4 547,419 527.1,415.2Z" fill="url(#plasma)" stroke="#000" stroke-width="1.6" stroke-linejoin="round"/>
<circle cx="654.7" cy="189.7" r="4.6" fill="#8a1010" opacity="0.85"/><path d="M654.7,185.8 l3.9,3.9 l-3.9,3.9 l-3.9,-3.9Z" fill="#33ee00" stroke="#e01010" stroke-width="0.9"/>
<circle cx="654.7" cy="251.8" r="4.6" fill="#8a1010" opacity="0.85"/><path d="M654.7,247.9 l3.9,3.9 l-3.9,3.9 l-3.9,-3.9Z" fill="#33ee00" stroke="#e01010" stroke-width="0.9"/>
<circle cx="722.1" cy="248.8" r="4.6" fill="#8a1010" opacity="0.85"/><path d="M722.1,244.9 l3.9,3.9 l-3.9,3.9 l-3.9,-3.9Z" fill="#33ee00" stroke="#e01010" stroke-width="0.9"/>
<circle cx="792.7" cy="262.8" r="4.6" fill="#8a1010" opacity="0.85"/><path d="M792.7,258.9 l3.9,3.9 l-3.9,3.9 l-3.9,-3.9Z" fill="#33ee00" stroke="#e01010" stroke-width="0.9"/>
<circle cx="600.7" cy="286.9" r="4.6" fill="#8a1010" opacity="0.85"/><path d="M600.7,283 l3.9,3.9 l-3.9,3.9 l-3.9,-3.9Z" fill="#33ee00" stroke="#e01010" stroke-width="0.9"/>
<circle cx="595" cy="295.7" r="4.6" fill="#8a1010" opacity="0.85"/><path d="M595,291.8 l3.9,3.9 l-3.9,3.9 l-3.9,-3.9Z" fill="#33ee00" stroke="#e01010" stroke-width="0.9"/>
<circle cx="641.9" cy="289" r="4.6" fill="#8a1010" opacity="0.85"/><path d="M641.9,285.1 l3.9,3.9 l-3.9,3.9 l-3.9,-3.9Z" fill="#33ee00" stroke="#e01010" stroke-width="0.9"/>
<circle cx="766.6" cy="307.9" r="4.6" fill="#8a1010" opacity="0.85"/><path d="M766.6,304 l3.9,3.9 l-3.9,3.9 l-3.9,-3.9Z" fill="#33ee00" stroke="#e01010" stroke-width="0.9"/>
<circle cx="631.7" cy="324.6" r="4.6" fill="#8a1010" opacity="0.85"/><path d="M631.7,320.7 l3.9,3.9 l-3.9,3.9 l-3.9,-3.9Z" fill="#33ee00" stroke="#e01010" stroke-width="0.9"/>
<circle cx="625.6" cy="327.8" r="4.6" fill="#8a1010" opacity="0.85"/><path d="M625.6,323.9 l3.9,3.9 l-3.9,3.9 l-3.9,-3.9Z" fill="#33ee00" stroke="#e01010" stroke-width="0.9"/>
<circle cx="633" cy="340.8" r="4.6" fill="#8a1010" opacity="0.85"/><path d="M633,336.9 l3.9,3.9 l-3.9,3.9 l-3.9,-3.9Z" fill="#33ee00" stroke="#e01010" stroke-width="0.9"/>
<circle cx="641.8" cy="340.8" r="4.6" fill="#8a1010" opacity="0.85"/><path d="M641.8,336.9 l3.9,3.9 l-3.9,3.9 l-3.9,-3.9Z" fill="#33ee00" stroke="#e01010" stroke-width="0.9"/>
<circle cx="710.9" cy="348.9" r="4.6" fill="#8a1010" opacity="0.85"/><path d="M710.9,345 l3.9,3.9 l-3.9,3.9 l-3.9,-3.9Z" fill="#33ee00" stroke="#e01010" stroke-width="0.9"/>
<circle cx="718.8" cy="358.9" r="4.6" fill="#8a1010" opacity="0.85"/><path d="M718.8,355 l3.9,3.9 l-3.9,3.9 l-3.9,-3.9Z" fill="#33ee00" stroke="#e01010" stroke-width="0.9"/>
<circle cx="609.8" cy="379.6" r="4.6" fill="#8a1010" opacity="0.85"/><path d="M609.8,375.7 l3.9,3.9 l-3.9,3.9 l-3.9,-3.9Z" fill="#33ee00" stroke="#e01010" stroke-width="0.9"/>
<circle cx="642.6" cy="376.8" r="4.6" fill="#8a1010" opacity="0.85"/><path d="M642.6,372.9 l3.9,3.9 l-3.9,3.9 l-3.9,-3.9Z" fill="#33ee00" stroke="#e01010" stroke-width="0.9"/>
<circle cx="572.7" cy="388.8" r="4.6" fill="#8a1010" opacity="0.85"/><path d="M572.7,384.9 l3.9,3.9 l-3.9,3.9 l-3.9,-3.9Z" fill="#33ee00" stroke="#e01010" stroke-width="0.9"/>
<circle cx="505.9" cy="350.8" r="4.6" fill="#8a1010" opacity="0.85"/><path d="M505.9,346.9 l3.9,3.9 l-3.9,3.9 l-3.9,-3.9Z" fill="#33ee00" stroke="#e01010" stroke-width="0.9"/>
<circle cx="625" cy="452.9" r="4.6" fill="#8a1010" opacity="0.85"/><path d="M625,449 l3.9,3.9 l-3.9,3.9 l-3.9,-3.9Z" fill="#33ee00" stroke="#e01010" stroke-width="0.9"/>
<circle cx="720.1" cy="437.9" r="4.6" fill="#8a1010" opacity="0.85"/><path d="M720.1,434 l3.9,3.9 l-3.9,3.9 l-3.9,-3.9Z" fill="#33ee00" stroke="#e01010" stroke-width="0.9"/>
<circle cx="721.8" cy="459.9" r="4.6" fill="#8a1010" opacity="0.85"/><path d="M721.8,456 l3.9,3.9 l-3.9,3.9 l-3.9,-3.9Z" fill="#33ee00" stroke="#e01010" stroke-width="0.9"/>
<rect x="679.4" y="239.5" width="7" height="7" fill="#f8e800" stroke="#ff1a00" stroke-width="1.2"/>
<rect x="748.5" y="239.5" width="7" height="7" fill="#f8e800" stroke="#ff1a00" stroke-width="1.2"/>
<rect x="727.4" y="272.3" width="7" height="7" fill="#f8e800" stroke="#ff1a00" stroke-width="1.2"/>
<rect x="720.3" y="279.4" width="7" height="7" fill="#f8e800" stroke="#ff1a00" stroke-width="1.2"/>
<rect x="918.5" y="265.2" width="7" height="7" fill="#f8e800" stroke="#ff1a00" stroke-width="1.2"/>
<rect x="857.5" y="283.1" width="7" height="7" fill="#f8e800" stroke="#ff1a00" stroke-width="1.2"/>
<rect x="917.3" y="283.1" width="7" height="7" fill="#f8e800" stroke="#ff1a00" stroke-width="1.2"/>
<rect x="940.5" y="278.4" width="7" height="7" fill="#f8e800" stroke="#ff1a00" stroke-width="1.2"/>
<rect x="938" y="288.5" width="7" height="7" fill="#f8e800" stroke="#ff1a00" stroke-width="1.2"/>
<rect x="941.9" y="289.5" width="7" height="7" fill="#f8e800" stroke="#ff1a00" stroke-width="1.2"/>
<rect x="937.5" y="298.9" width="7" height="7" fill="#f8e800" stroke="#ff1a00" stroke-width="1.2"/>
<rect x="938.4" y="303.3" width="7" height="7" fill="#f8e800" stroke="#ff1a00" stroke-width="1.2"/>
<rect x="844.3" y="297.4" width="7" height="7" fill="#f8e800" stroke="#ff1a00" stroke-width="1.2"/>
<rect x="871.2" y="298.2" width="7" height="7" fill="#f8e800" stroke="#ff1a00" stroke-width="1.2"/>
<rect x="888.3" y="298.2" width="7" height="7" fill="#f8e800" stroke="#ff1a00" stroke-width="1.2"/>
<rect x="1003.4" y="297.4" width="7" height="7" fill="#f8e800" stroke="#ff1a00" stroke-width="1.2"/>
<rect x="1012.2" y="304.4" width="7" height="7" fill="#f8e800" stroke="#ff1a00" stroke-width="1.2"/>
<rect x="894.4" y="319.3" width="7" height="7" fill="#f8e800" stroke="#ff1a00" stroke-width="1.2"/>
<rect x="952.1" y="319.3" width="7" height="7" fill="#f8e800" stroke="#ff1a00" stroke-width="1.2"/>
<rect x="882.5" y="327.2" width="7" height="7" fill="#f8e800" stroke="#ff1a00" stroke-width="1.2"/>
<rect x="888.3" y="334.3" width="7" height="7" fill="#f8e800" stroke="#ff1a00" stroke-width="1.2"/>
<rect x="833.2" y="334.3" width="7" height="7" fill="#f8e800" stroke="#ff1a00" stroke-width="1.2"/>
<rect x="859.2" y="341.3" width="7" height="7" fill="#f8e800" stroke="#ff1a00" stroke-width="1.2"/>
<rect x="1010.5" y="350.5" width="7" height="7" fill="#f8e800" stroke="#ff1a00" stroke-width="1.2"/>
<rect x="844.3" y="358.2" width="7" height="7" fill="#f8e800" stroke="#ff1a00" stroke-width="1.2"/>
<rect x="1049.5" y="318.5" width="7" height="7" fill="#f8e800" stroke="#ff1a00" stroke-width="1.2"/>
<rect x="1066" y="309.5" width="7" height="7" fill="#f8e800" stroke="#ff1a00" stroke-width="1.2"/>
<rect x="740.2" y="316.2" width="7" height="7" fill="#f8e800" stroke="#ff1a00" stroke-width="1.2"/>
<rect x="776.3" y="328.1" width="7" height="7" fill="#f8e800" stroke="#ff1a00" stroke-width="1.2"/>
<rect x="703.3" y="330.3" width="7" height="7" fill="#f8e800" stroke="#ff1a00" stroke-width="1.2"/>
<rect x="715.3" y="375.1" width="7" height="7" fill="#f8e800" stroke="#ff1a00" stroke-width="1.2"/>
<rect x="712.1" y="384.1" width="7" height="7" fill="#f8e800" stroke="#ff1a00" stroke-width="1.2"/>
<rect x="719.1" y="388.3" width="7" height="7" fill="#f8e800" stroke="#ff1a00" stroke-width="1.2"/>
<rect x="920.5" y="365.3" width="7" height="7" fill="#f8e800" stroke="#ff1a00" stroke-width="1.2"/>
<rect x="935.4" y="370.2" width="7" height="7" fill="#f8e800" stroke="#ff1a00" stroke-width="1.2"/>
<rect x="912.2" y="385.2" width="7" height="7" fill="#f8e800" stroke="#ff1a00" stroke-width="1.2"/>
<rect x="1019.3" y="364.1" width="7" height="7" fill="#f8e800" stroke="#ff1a00" stroke-width="1.2"/>
<rect x="1028.2" y="371.1" width="7" height="7" fill="#f8e800" stroke="#ff1a00" stroke-width="1.2"/>
<rect x="998.3" y="380.3" width="7" height="7" fill="#f8e800" stroke="#ff1a00" stroke-width="1.2"/>
<rect x="865.1" y="399.2" width="7" height="7" fill="#f8e800" stroke="#ff1a00" stroke-width="1.2"/>
<rect x="856.3" y="405.4" width="7" height="7" fill="#f8e800" stroke="#ff1a00" stroke-width="1.2"/>
<rect x="1009.3" y="424.2" width="7" height="7" fill="#f8e800" stroke="#ff1a00" stroke-width="1.2"/>
<rect x="1003.1" y="433.2" width="7" height="7" fill="#f8e800" stroke="#ff1a00" stroke-width="1.2"/>
<rect x="1020.1" y="447.2" width="7" height="7" fill="#f8e800" stroke="#ff1a00" stroke-width="1.2"/>
<rect x="920.5" y="454.3" width="7" height="7" fill="#f8e800" stroke="#ff1a00" stroke-width="1.2"/>
<rect x="978.5" y="470.1" width="7" height="7" fill="#f8e800" stroke="#ff1a00" stroke-width="1.2"/>
<rect x="1070.1" y="393.4" width="7" height="7" fill="#f8e800" stroke="#ff1a00" stroke-width="1.2"/>
<rect x="1067.5" y="394.3" width="7" height="7" fill="#f8e800" stroke="#ff1a00" stroke-width="1.2"/>
<rect x="1060.5" y="424.2" width="7" height="7" fill="#f8e800" stroke="#ff1a00" stroke-width="1.2"/>
<rect x="1117.2" y="426.3" width="7" height="7" fill="#f8e800" stroke="#ff1a00" stroke-width="1.2"/>
<rect x="1078.4" y="466.4" width="7" height="7" fill="#f8e800" stroke="#ff1a00" stroke-width="1.2"/>
<rect x="1114.1" y="458.1" width="7" height="7" fill="#f8e800" stroke="#ff1a00" stroke-width="1.2"/>
<rect x="1109.2" y="463.2" width="7" height="7" fill="#f8e800" stroke="#ff1a00" stroke-width="1.2"/>
<rect x="1110.2" y="531.3" width="7" height="7" fill="#f8e800" stroke="#ff1a00" stroke-width="1.2"/>
<rect x="1088.6" y="565.3" width="7" height="7" fill="#f8e800" stroke="#ff1a00" stroke-width="1.2"/>
<rect x="1130.4" y="577" width="7" height="7" fill="#f8e800" stroke="#ff1a00" stroke-width="1.2"/>
<rect x="1131.3" y="586.2" width="7" height="7" fill="#f8e800" stroke="#ff1a00" stroke-width="1.2"/>
<rect x="1152.4" y="572.3" width="7" height="7" fill="#f8e800" stroke="#ff1a00" stroke-width="1.2"/>
<rect x="1162.4" y="591.1" width="7" height="7" fill="#f8e800" stroke="#ff1a00" stroke-width="1.2"/>
<rect x="943.5" y="590.2" width="7" height="7" fill="#f8e800" stroke="#ff1a00" stroke-width="1.2"/>
<rect x="953.6" y="602.9" width="7" height="7" fill="#f8e800" stroke="#ff1a00" stroke-width="1.2"/>
<rect x="969.9" y="595.5" width="7" height="7" fill="#f8e800" stroke="#ff1a00" stroke-width="1.2"/>
<rect x="969.4" y="596.5" width="7" height="7" fill="#f8e800" stroke="#ff1a00" stroke-width="1.2"/>
<rect x="823.3" y="552.3" width="7" height="7" fill="#f8e800" stroke="#ff1a00" stroke-width="1.2"/>
<rect x="827.4" y="564.1" width="7" height="7" fill="#f8e800" stroke="#ff1a00" stroke-width="1.2"/>
<rect x="801.4" y="578.2" width="7" height="7" fill="#f8e800" stroke="#ff1a00" stroke-width="1.2"/>
<rect x="821.4" y="682.5" width="7" height="7" fill="#f8e800" stroke="#ff1a00" stroke-width="1.2"/>
<circle cx="799.1" cy="227.9" r="8" fill="#000" opacity="0.48" filter="url(#sh)"/>
<circle cx="830.4" cy="249.2" r="8" fill="#000" opacity="0.48" filter="url(#sh)"/>
<circle cx="838.5" cy="257.5" r="8" fill="#000" opacity="0.48" filter="url(#sh)"/>
<circle cx="888.4" cy="251.3" r="8" fill="#000" opacity="0.48" filter="url(#sh)"/>
<circle cx="781.2" cy="275.7" r="8" fill="#000" opacity="0.48" filter="url(#sh)"/>
<circle cx="880.5" cy="336.6" r="8" fill="#000" opacity="0.48" filter="url(#sh)"/>
<circle cx="880.2" cy="368.7" r="8" fill="#000" opacity="0.48" filter="url(#sh)"/>
<circle cx="903.1" cy="366.9" r="8" fill="#000" opacity="0.48" filter="url(#sh)"/>
<circle cx="783.5" cy="424.2" r="8" fill="#000" opacity="0.48" filter="url(#sh)"/>
<circle cx="1105.6" cy="397.1" r="8" fill="#000" opacity="0.48" filter="url(#sh)"/>
<circle cx="1115.7" cy="400.7" r="8" fill="#000" opacity="0.48" filter="url(#sh)"/>
<circle cx="1151.7" cy="414.7" r="8" fill="#000" opacity="0.48" filter="url(#sh)"/>
<circle cx="1106" cy="443.7" r="8" fill="#000" opacity="0.48" filter="url(#sh)"/>
<circle cx="787.3" cy="580.7" r="8" fill="#000" opacity="0.48" filter="url(#sh)"/>
<circle cx="797.7" cy="586.8" r="8" fill="#000" opacity="0.48" filter="url(#sh)"/>
<path d="M793.1,215 794.6,218.9 798.3,217.2 796.6,220.9 800.5,222.4 796.6,223.9 798.3,227.6 794.6,225.9 793.1,229.8 791.6,225.9 787.9,227.6 789.6,223.9 785.7,222.4 789.6,220.9 787.9,217.2 791.6,218.9Z" fill="#00f000" stroke="#f02a10" stroke-width="1.05" stroke-linejoin="miter"/>
<path d="M824.4,236.3 825.9,240.2 829.6,238.5 827.9,242.2 831.8,243.7 827.9,245.2 829.6,248.9 825.9,247.2 824.4,251.1 822.9,247.2 819.2,248.9 820.9,245.2 817,243.7 820.9,242.2 819.2,238.5 822.9,240.2Z" fill="#00f000" stroke="#f02a10" stroke-width="1.05" stroke-linejoin="miter"/>
<path d="M832.5,244.6 834,248.5 837.7,246.8 836,250.5 839.9,252 836,253.5 837.7,257.2 834,255.5 832.5,259.4 831,255.5 827.3,257.2 829,253.5 825.1,252 829,250.5 827.3,246.8 831,248.5Z" fill="#00f000" stroke="#f02a10" stroke-width="1.05" stroke-linejoin="miter"/>
<path d="M882.4,238.4 883.9,242.3 887.6,240.6 885.9,244.3 889.8,245.8 885.9,247.3 887.6,251 883.9,249.3 882.4,253.2 880.9,249.3 877.2,251 878.9,247.3 875,245.8 878.9,244.3 877.2,240.6 880.9,242.3Z" fill="#00f000" stroke="#f02a10" stroke-width="1.05" stroke-linejoin="miter"/>
<path d="M775.2,262.8 776.7,266.7 780.4,265 778.7,268.7 782.6,270.2 778.7,271.7 780.4,275.4 776.7,273.7 775.2,277.6 773.7,273.7 770,275.4 771.7,271.7 767.8,270.2 771.7,268.7 770,265 773.7,266.7Z" fill="#00f000" stroke="#f02a10" stroke-width="1.05" stroke-linejoin="miter"/>
<path d="M874.5,323.7 876,327.6 879.7,325.9 878,329.6 881.9,331.1 878,332.6 879.7,336.3 876,334.6 874.5,338.5 873,334.6 869.3,336.3 871,332.6 867.1,331.1 871,329.6 869.3,325.9 873,327.6Z" fill="#00f000" stroke="#f02a10" stroke-width="1.05" stroke-linejoin="miter"/>
<path d="M874.2,355.8 875.7,359.7 879.4,358 877.7,361.7 881.6,363.2 877.7,364.7 879.4,368.4 875.7,366.7 874.2,370.6 872.7,366.7 869,368.4 870.7,364.7 866.8,363.2 870.7,361.7 869,358 872.7,359.7Z" fill="#00f000" stroke="#f02a10" stroke-width="1.05" stroke-linejoin="miter"/>
<path d="M897.1,354 898.6,357.9 902.3,356.2 900.6,359.9 904.5,361.4 900.6,362.9 902.3,366.6 898.6,364.9 897.1,368.8 895.6,364.9 891.9,366.6 893.6,362.9 889.7,361.4 893.6,359.9 891.9,356.2 895.6,357.9Z" fill="#00f000" stroke="#f02a10" stroke-width="1.05" stroke-linejoin="miter"/>
<path d="M777.5,411.3 779,415.2 782.7,413.5 781,417.2 784.9,418.7 781,420.2 782.7,423.9 779,422.2 777.5,426.1 776,422.2 772.3,423.9 774,420.2 770.1,418.7 774,417.2 772.3,413.5 776,415.2Z" fill="#00f000" stroke="#f02a10" stroke-width="1.05" stroke-linejoin="miter"/>
<path d="M1099.6,384.2 1101.1,388.1 1104.8,386.4 1103.1,390.1 1107,391.6 1103.1,393.1 1104.8,396.8 1101.1,395.1 1099.6,399 1098.1,395.1 1094.4,396.8 1096.1,393.1 1092.2,391.6 1096.1,390.1 1094.4,386.4 1098.1,388.1Z" fill="#00f000" stroke="#f02a10" stroke-width="1.05" stroke-linejoin="miter"/>
<path d="M1109.7,387.8 1111.2,391.7 1114.9,390 1113.2,393.7 1117.1,395.2 1113.2,396.7 1114.9,400.4 1111.2,398.7 1109.7,402.6 1108.2,398.7 1104.5,400.4 1106.2,396.7 1102.3,395.2 1106.2,393.7 1104.5,390 1108.2,391.7Z" fill="#00f000" stroke="#f02a10" stroke-width="1.05" stroke-linejoin="miter"/>
<path d="M1145.7,401.8 1147.2,405.7 1150.9,404 1149.2,407.7 1153.1,409.2 1149.2,410.7 1150.9,414.4 1147.2,412.7 1145.7,416.6 1144.2,412.7 1140.5,414.4 1142.2,410.7 1138.3,409.2 1142.2,407.7 1140.5,404 1144.2,405.7Z" fill="#00f000" stroke="#f02a10" stroke-width="1.05" stroke-linejoin="miter"/>
<path d="M1100,430.8 1101.5,434.7 1105.2,433 1103.5,436.7 1107.4,438.2 1103.5,439.7 1105.2,443.4 1101.5,441.7 1100,445.6 1098.5,441.7 1094.8,443.4 1096.5,439.7 1092.6,438.2 1096.5,436.7 1094.8,433 1098.5,434.7Z" fill="#00f000" stroke="#f02a10" stroke-width="1.05" stroke-linejoin="miter"/>
<path d="M781.3,567.8 782.8,571.7 786.5,570 784.8,573.7 788.7,575.2 784.8,576.7 786.5,580.4 782.8,578.7 781.3,582.6 779.8,578.7 776.1,580.4 777.8,576.7 773.9,575.2 777.8,573.7 776.1,570 779.8,571.7Z" fill="#00f000" stroke="#f02a10" stroke-width="1.05" stroke-linejoin="miter"/>
<path d="M791.7,573.9 793.2,577.8 796.9,576.1 795.2,579.8 799.1,581.3 795.2,582.8 796.9,586.5 793.2,584.8 791.7,588.7 790.2,584.8 786.5,586.5 788.2,582.8 784.3,581.3 788.2,579.8 786.5,576.1 790.2,577.8Z" fill="#00f000" stroke="#f02a10" stroke-width="1.05" stroke-linejoin="miter"/>
</svg>
<div class="abs" style="left:0;top:121px;width:5px;height:578px;background:#e4e4e4;border-left:1px solid #b8b8b8"></div>
<div class="abs" style="left:1364px;top:160px;width:1px;height:539px;background:#a8a8a8"></div>
<div class="wm1">Activate Windows</div>
<div class="wm2">Go to Settings to activate Windows.</div>
<div id="status">
<svg width="1366" height="29" viewBox="0 699 1366 29" style="position:absolute;left:0;top:-1px;z-index:2"><circle cx="16" cy="712" r="4" fill="none" stroke="#8a8a8a" stroke-width="1.3"/><path d="M19,715 l4,4" stroke="#8a8a8a" stroke-width="1.5"/><g transform="translate(736,714) rotate(-30)"><ellipse cx="0" cy="1" rx="5" ry="7" fill="#fff" stroke="#333" stroke-width="1.4"/><path d="M-5,-1 h10 M0,-6 v5" stroke="#333" stroke-width="1"/></g><circle cx="740" cy="718" r="3" fill="#fff" stroke="#333" stroke-width="1"/><rect x="846" y="705" width="1" height="19" fill="#d5d5d5"/><path d="M851,712 h8 l-4,4.5z" fill="#555"/><path d="M880.5,711 v-3 a3.5,3.5 0 0 1 7,0 v3" fill="none" stroke="#777" stroke-width="1.6"/><rect x="878" y="711" width="12" height="9" rx="1" fill="#777"/><rect x="1015" y="705" width="1" height="19" fill="#d5d5d5"/><path d="M1019,712 h7 l-3.5,-4z M1019,717 h7 l-3.5,4z" fill="#555"/><rect x="1158" y="705" width="1" height="19" fill="#d5d5d5"/><path d="M1162,712 h7 l-3.5,-4z M1162,717 h7 l-3.5,4z" fill="#555"/><rect x="1180.5" y="707.5" width="12" height="12" fill="#fff" stroke="#333"/><path d="M1183,713 l2.5,3.5 5,-7" fill="none" stroke="#111" stroke-width="1.5"/><g fill="none" stroke="#777" stroke-width="0.9"><circle cx="1256" cy="714" r="6"/><ellipse cx="1256" cy="714" rx="2.6" ry="6"/><path d="M1250,714 h12 M1251,710.5 h10 M1251,717.5 h10"/></g><path d="M1351,706.5 a8,6.5 0 1 1 -4,12 l-4,2.5 1.5,-4 a8,6.5 0 0 1 6.5,-10.5z" fill="#777"/><circle cx="1347" cy="713" r="1.1" fill="#f0f0f0"/><circle cx="1351" cy="713" r="1.1" fill="#f0f0f0"/><circle cx="1355" cy="713" r="1.1" fill="#f0f0f0"/></svg>
  <div class="inp" style="left:4px;top:4px;width:199px;color:#7d7d7d;padding-left:28px">Type to locate (Ctrl+K)</div>
  <div class="lbl" style="left:559px">Coordinate</div>
  <div class="inp" style="left:616px;top:4px;width:109px">11563262,2478187</div>
  <div class="lbl" style="left:757px">Scale</div>
  <div class="inp" style="left:786px;top:4px;width:81px">1:143983</div>
  <div class="lbl" style="left:899px">Magnifier</div>
  <div class="inp" style="left:947px;top:4px;width:84px">100%</div>
  <div class="lbl" style="left:1039px">Rotation</div>
  <div class="inp" style="left:1090px;top:4px;width:84px">0.0 °</div>
  <div class="lbl" style="left:1197px">Render</div>
  <div class="lbl" style="left:1266px">EPSG:3857</div>
</div>
<div id="taskbar">
  <div id="tsearch"><span>Type here to search</span></div>
  <svg width="1366" height="40" style="position:absolute;left:0;top:0"><path d="M16,14 L23,13 V19.5 H16z M24,12.8 L32.5,11.6 V19.5 H24z M16,20.5 H23 V27 L16,26z M24,20.5 H32.5 V28.4 L24,27.2z" fill="#fff"/><rect x="48" y="0" width="344" height="1" fill="#9a9a9a"/><circle cx="70" cy="18" r="5.5" fill="none" stroke="#222" stroke-width="1.3"/><path d="M66,22 L60,28" stroke="#222" stroke-width="1.5"/><g stroke="#fff" stroke-width="1.3" fill="none"><path d="M407,13.5 h10 M407,26.5 h10"/><rect x="408.5" y="16.5" width="7.5" height="7"/><path d="M420.5,11 v18"/></g><rect x="419" y="17" width="3" height="3" fill="#fff"/><path d="M456,13 h7 l2,2 h12 v14 h-21z" fill="#f7c74a"/><rect x="456" y="16" width="21" height="13" fill="#fcd867"/><path d="M461,29 v-6 h11 v6 h-3 v-3 h-5 v3z" fill="#3e8ee0"/><circle cx="516" cy="20" r="11" fill="#1f8fd6"/><path d="M507,16 a10,10 0 0 1 18,3 a5,4 0 0 1 -8,2 a6,5 0 0 0 -10,-5z" fill="#5ed069"/><circle cx="510" cy="25" r="5" fill="#9a9a9a" stroke="#1a1a1a" stroke-width="1"/><circle cx="510" cy="23.5" r="1.8" fill="#ddd"/><path d="M553,16 l12,-8 12,8 v13 h-24z" fill="#1c6fc7"/><path d="M555,16 h20 l-10,6z" fill="#fff"/><path d="M553,17 l12,7 12,-7 v12 h-24z" fill="#31a4ec"/><path d="M609,12 v-4 h8 v4" fill="none" stroke="#e8e8e8" stroke-width="1.4"/><rect x="602" y="12" width="23" height="18" fill="#f2f2f2"/><rect x="609" y="17" width="4" height="4" fill="#f25022"/><rect x="614" y="17" width="4" height="4" fill="#7fba00"/><rect x="609" y="22" width="4" height="4" fill="#00a4ef"/><rect x="614" y="22" width="4" height="4" fill="#ffb900"/><rect x="651" y="8" width="24" height="24" fill="#000"/><path d="M659,12 h3 l3,10 v-10 h3 v16 h-3 l-3,-10 v10 h-3z" fill="#e50914"/><rect x="700" y="8" width="24" height="24" fill="#c9c9c9"/><path d="M701,22 l9,-7 4,3 -9,8z" fill="#2d6fd0"/><path d="M707,28 l10,-9 5,2 -8,8z" fill="#d8452a"/><circle cx="715" cy="12" r="3.5" fill="#555"/><circle cx="721" cy="11" r="2.5" fill="#999"/><rect x="737" y="0" width="44" height="40" fill="#3d3d3d"/><rect x="781" y="0" width="4" height="40" fill="#2e2e2e"/><circle cx="761" cy="20" r="9" fill="none" stroke="#73a32c" stroke-width="4"/><path d="M759,18 l11,11" stroke="#73a32c" stroke-width="4"/><path d="M758,17 l5,5" stroke="#ee7913" stroke-width="3.5"/><rect x="737" y="38" width="48" height="2" fill="#76b9ed"/><circle cx="810" cy="20" r="11" fill="#db4437"/><path d="M810,20 L820.5,23.5 A11,11 0 0 1 805,29.8z" fill="#f4c20d"/><path d="M810,20 L805,29.8 A11,11 0 0 1 799.3,16z" fill="#0f9d58"/><path d="M810,20 L799.3,16 A11,11 0 0 1 800.5,14.5z" fill="#0f9d58"/><circle cx="810" cy="20" r="5" fill="#fff"/><circle cx="810" cy="20" r="3.8" fill="#4285f4"/><rect x="790" y="38" width="40" height="2" fill="#76b9ed"/><path d="M850,30 C846,20 852,12 867,8 C868,22 864,28 852,29z" fill="none" stroke="#1f8a3a" stroke-width="1.3"/><path d="M849,32 L862,16 M853,26 l0,-5 M856,24 l0,-5" stroke="#1f8a3a" stroke-width="1.2"/><rect x="839" y="38" width="40" height="2" fill="#76b9ed"/><path d="M1040,24 a5,5 0 0 1 3,-9 a6,6 0 0 1 11,1 a4,4 0 0 1 3,8z" fill="#cfe4f6"/><path d="M1049,24 v4" stroke="#56a8e8" stroke-width="2.2"/><path d="M1118,23 l5,-5 5,5" fill="none" stroke="#fff" stroke-width="1.3"/><rect x="1142.5" y="15.5" width="8" height="9" rx="1" fill="none" stroke="#fff" stroke-width="1.1"/><path d="M1151,18 l3,-2 v8 l-3,-2" fill="none" stroke="#fff" stroke-width="1.1"/><path d="M1143,12.5 h8 M1143,27.5 h8" stroke="#fff" stroke-width="1"/><g fill="none" stroke="#fff" stroke-width="1.2"><path d="M1163,26 a12,12 0 0 1 14,-11"/><path d="M1166,26 a9,9 0 0 1 11,-8"/><path d="M1169,26 a6,6 0 0 1 8,-5"/></g><circle cx="1177" cy="26" r="1.3" fill="#fff"/><path d="M1188,17.5 h3 l4,-4 v13 l-4,-4 h-3z" fill="none" stroke="#fff" stroke-width="1.1"/><path d="M1198,16.5 a4,4 0 0 1 0,7 M1201,14 a7,7 0 0 1 0,12" fill="none" stroke="#fff" stroke-width="1.1"/><path d="M1325.5,12.5 h15 v11 h-8 l-3,3 v-3 h-4z" fill="none" stroke="#fff" stroke-width="1.2"/><rect x="1360" y="0" width="1" height="40" fill="#5a5a5a"/></svg>
  <div class="abs" style="left:1070px;top:12px;font-size:13px;color:#fff">30°C</div>
  <div class="abs" style="left:1213px;top:13px;font-size:11.5px;color:#fff;letter-spacing:-0.3px">ENG</div>
  <div class="abs" style="left:1247px;top:2px;width:62px;text-align:center;font-size:11.4px;color:#fff;line-height:18px">1:22 pm<br>03/07/2021</div>
</div>
<div id="dlgshadow"></div>
<div id="dlg">
<svg width="405" height="603" viewBox="4 96 405 603" style="position:absolute;left:-1px;top:-1px;z-index:5;pointer-events:none"><rect x="9.5" y="131.5" width="23" height="22" rx="3" fill="#dadada" stroke="#b3b3b3"/><g transform="translate(20.5,142) scale(0.78) translate(-12,-12)"><g transform="translate(0,0)"><path d="M5,21 l2,-5 11,-13 3,2.5 -11,13z" fill="#f0e05a" stroke="#8a7a30" stroke-width="0.9"/><path d="M5,21 l2,-5 3,2.5z" fill="#777"/></g></g><g transform="translate(46,142) scale(0.78) translate(-12,-12)"><g transform="translate(0,0)"><rect x="2" y="4" width="16" height="5" rx="1" fill="#f3d33a" stroke="#c8a42a"/><rect x="2" y="10" width="16" height="5" rx="1" fill="#f3d33a" stroke="#c8a42a"/><rect x="2" y="16" width="16" height="5" rx="1" fill="#f3d33a" stroke="#c8a42a"/><path d="M7,22 l2,-5 10,-14 3,2 -10,14z" fill="#e0692a" stroke="#444" stroke-width="0.8"/></g></g><g transform="translate(70.6,142) scale(0.78) translate(-12,-12)"><g transform="translate(0,0)"><rect x="3" y="2.5" width="18" height="19" rx="2" fill="#e3e3e3" stroke="#d2d2d2"/><rect x="6" y="3.5" width="12" height="7" fill="#f3f3f3"/><rect x="7" y="14" width="10" height="6" fill="#f3f3f3"/></g></g><g transform="translate(96,142) scale(0.78) translate(-12,-12)"><g transform="translate(0,0)"><path d="M3,11 A9,8 0 0 1 19,6 L21,3 V11 H13 L16,8 A6,5 0 0 0 7,11z M21,13 A9,8 0 0 1 5,18 L3,21 V13 H11 L8,16 A6,5 0 0 0 17,13z" fill="#dcdcdc"/></g></g><rect x="112" y="133" width="1" height="18" fill="#cfcfcf"/><g transform="translate(128,142) scale(0.78) translate(-12,-12)"><g transform="translate(0,0)"><rect x="2.5" y="3.5" width="17" height="16" fill="#fff" stroke="#5b8dc9"/><rect x="3" y="4" width="16" height="3" fill="#5b8dc9"/><rect x="2" y="8" width="18" height="3" fill="#f3d33a"/><path d="M5,14 h12 M5,17 h12" stroke="#5b8dc9"/><rect x="12" y="13" width="10" height="10" rx="1" fill="#c9a324"/><path d="M17,14 v8 M13.55,16 l6.9,4 M20.45,16 l-6.9,4" stroke="#fff" stroke-width="1.1"/><circle cx="17" cy="18" r="2.2" fill="#c9a324" stroke="#fff" stroke-width="1.1"/></g></g><g transform="translate(152.5,142) scale(0.78) translate(-12,-12)"><g transform="translate(0,0)"><rect x="3" y="3" width="18" height="3" fill="#d4c8c8"/><path d="M4.5,7 h15 l-1,15 h-13z" fill="#d4c8c8" stroke="#cbb7b7"/><path d="M9,9 v11 M12,9 v11 M15,9 v11" stroke="#f0eeee"/></g></g><g transform="translate(178,142) scale(0.78) translate(-12,-12)"><g transform="translate(0,0)"><path d="M2,6 L17,14 M2,11 L17,8" stroke="#ccc" stroke-width="1.4"/><circle cx="19" cy="7" r="3" fill="none" stroke="#c8bcbc" stroke-width="1.4"/><circle cx="19" cy="16" r="3" fill="none" stroke="#c8bcbc" stroke-width="1.4"/></g></g><g transform="translate(202.6,142) scale(0.78) translate(-12,-12)"><g transform="translate(0,0)"><path d="M9,2 h8 l4,4 v12 h-12z" fill="#f8f8f8" stroke="#ccc"/><path d="M3,7 h8 l4,4 v12 h-12z" fill="#f8f8f8" stroke="#ccc"/><path d="M5,14 h7 M5,16 h7 M5,18 h7" stroke="#ddd" stroke-width="0.8"/></g></g><g transform="translate(228,142) scale(0.78) translate(-12,-12)"><g transform="translate(0,0)"><rect x="3" y="3" width="17" height="20" fill="#f6e2b7" stroke="#c6932f" stroke-width="1.3"/><rect x="8" y="1" width="8" height="4" rx="1" fill="#777"/><path d="M6,6 h9 l3,3 v12 h-12z" fill="#fff" stroke="#555"/><path d="M8,12 h8 M8,14.5 h8 M8,17 h8" stroke="#555" stroke-width="0.9"/></g></g><rect x="244" y="133" width="1" height="18" fill="#cfcfcf"/><g transform="translate(259.7,142) scale(0.78) translate(-12,-12)"><g transform="translate(0,0)"><text x="2" y="13" font-family="Liberation Serif" font-size="15" fill="#6b2f8a">ε</text><rect x="9" y="9" width="13" height="13" rx="1" fill="#f3d33a" stroke="#c8a42a"/></g></g><g transform="translate(284.7,142) scale(0.78) translate(-12,-12)"><g transform="translate(0,0)"><rect x="2" y="3" width="19" height="5" rx="2" fill="#f3d33a" stroke="#c8a42a"/><rect x="2" y="10" width="19" height="5" rx="2" fill="#f3d33a" stroke="#c8a42a"/><rect x="2" y="17" width="19" height="5" rx="2" fill="#f3d33a" stroke="#c8a42a"/></g></g><g transform="translate(310,142) scale(0.78) translate(-12,-12)"><g transform="translate(0,0)"><rect x="2.5" y="2.5" width="18" height="18" fill="#eee" stroke="#aaa"/><path d="M2.5,2.5 V20.5 H20.5z" fill="#f3d33a"/><path d="M2.5,2.5 L20.5,20.5" stroke="#777"/></g></g><g transform="translate(335.5,142) scale(0.78) translate(-12,-12)"><g transform="translate(0,0)"><rect x="2" y="2" width="13" height="13" rx="1" fill="#f3d33a" stroke="#c8a42a"/><circle cx="17" cy="18" r="4.5" fill="#e33"/><path d="M14.5,20.5 l5,-5" stroke="#fff" stroke-width="1.2"/></g></g><g transform="translate(360,142) scale(0.78) translate(-12,-12)"><g transform="translate(0,0)"><path d="M2,3 h20 l-7,8 v11 l-3,-2 v-9z" fill="#5b8dc9" stroke="#3e6ea8" stroke-width="0.8"/><rect x="2" y="2.5" width="20" height="3" fill="#f3d33a"/></g></g><text x="393" y="147" font-family="Liberation Sans" font-size="13" fill="#555">››</text><path d="M89,169 h7 l-3.5,4z" fill="#555"/><rect x="225" y="160" width="1" height="23" fill="#d0d0d0"/><path d="M230,169 h8 l-4,4.5z" fill="#555"/><path d="M396.5,196 h8 l-4,-4z" fill="#555"/><path d="M396.5,643 h8 l-4,4z" fill="#555"/><path d="M14,656 v8 l-4,-4z" fill="#444"/><path d="M383,656 v8 l4,-4z" fill="#444"/><g transform="translate(19,683) scale(0.62) translate(-12,-12)"><path d="M2,3 h20 l-7,8 v12 l-3,-2 v-10z" fill="#5b8dc9" stroke="#3e6ea8" stroke-width="0.8"/><rect x="2" y="2" width="20" height="3.5" fill="#f3d33a"/></g><path d="M119,687 h5 l-2.5,3z" fill="#555"/><rect x="360" y="675" width="16" height="15" fill="none"/><rect x="362.5" y="677.5" width="12" height="10" fill="#dce8f5" stroke="#5b8dc9"/><path d="M364,680.5 h3 M364,684.5 h3 M369,682.5 h4" stroke="#5b8dc9"/><rect x="381.5" y="672.5" width="23" height="21" rx="2" fill="#dadada" stroke="#b3b3b3"/><rect x="385.5" y="676.5" width="14" height="13" fill="#fff" stroke="#5b8dc9"/><rect x="386" y="677" width="13" height="2.5" fill="#5b8dc9"/><path d="M387,682 h2 M390,682 h8 M387,684.5 h2 M390,684.5 h8 M387,687 h2 M390,687 h8" stroke="#5b8dc9" stroke-width="0.9"/></svg>
  <div id="dlgtitle">
    <svg class="abs" style="left:8px;top:6px" width="17" height="17" viewBox="0 0 17 17"><path d="M13.2,11.6 A6.3,6.3 0 1 0 10.8,13.6" fill="none" stroke="#7aa823" stroke-width="2.9"/><path d="M8.2,8.2 L14.3,14.3" stroke="#fff" stroke-width="4.4" stroke-linecap="round"/><path d="M8.6,8.6 L14.3,14.3" stroke="#5f9a2c" stroke-width="2.8" stroke-linecap="round"/><path d="M7.6,7.6 L9.6,9.6" stroke="#f08a1c" stroke-width="2.6" stroke-linecap="round"/></svg>
    <div class="t">GibbonSightings_Merged — Features Tota...</div>
    <svg class="abs" style="left:280px;top:9px" width="120" height="12" viewBox="0 0 120 12">
      <path d="M4 5.5 H14.5" stroke="#000" stroke-width="1"/>
      <rect x="49.5" y="0.5" width="10" height="10" fill="none" stroke="#000"/>
      <path d="M95 0 L105.5 10.5 M105.5 0 L95 10.5" stroke="#000" stroke-width="1.1"/>
    </svg>
  </div>
  <div id="dlgtb"><!--DTB--></div>
  <div class="btn" style="left:4px;top:63px;width:96px;height:24px;text-align:left;padding:4px 0 0 5px"><b style="font-size:10.5px;color:#505050;letter-spacing:-0.4px">123</b> <span style="font-size:11.5px">fid</span></div>
  <div class="abs" style="left:103px;top:67px;font-size:13px">=</div>
  <div class="btn" style="left:114px;top:63px;width:24px;height:24px;color:#6b2f8a;font-size:18px;font-family:'Liberation Serif',serif;padding-top:1px">ε</div>
  <div class="inp" style="left:144px;top:63px;width:96px;height:24px;padding:5px 0 0 5px"><b style="font-size:10.5px;color:#505050;letter-spacing:-0.4px">123</b></div>
  <div class="btn" style="left:245px;top:64px;width:62px;height:21px;padding-top:3px">Update All</div>
  <div class="btn" style="left:311px;top:64px;width:92px;height:21px;padding-top:3px;color:#8c8c8c;border-color:#d0d0d0">Update Selected</div>
  <div id="table">
    <div id="thead"><div style="left:0;width:19px"></div><div style="left:19px;width:100px">fid</div><div style="left:119px;width:100px">Observer</div><div style="left:219px;width:100px">GroupSize</div><div style="left:319px;width:70px;text-align:left;padding-left:25px">Waypoint</div></div>
    <div class="row alt" style="top:14.8px"><div class="vh">74</div><div class="c1">74</div><div class="c2">Binh</div><div class="c3">4</div><div class="c4"></div></div>
<div class="row " style="top:44.8px"><div class="vh">75</div><div class="c1">75</div><div class="c2">Binh</div><div class="c3">1</div><div class="c4"></div></div>
<div class="row alt" style="top:74.8px"><div class="vh">76</div><div class="c1">76</div><div class="c2">Binh</div><div class="c3">1</div><div class="c4"></div></div>
<div class="row " style="top:104.8px"><div class="vh">77</div><div class="c1">77</div><div class="c2">Binh</div><div class="c3">4</div><div class="c4"></div></div>
<div class="row alt" style="top:134.8px"><div class="vh">78</div><div class="c1">78</div><div class="c2">Binh</div><div class="c3">4</div><div class="c4"></div></div>
<div class="row " style="top:164.8px"><div class="vh">79</div><div class="c1">79</div><div class="c2">Binh</div><div class="c3">4</div><div class="c4"></div></div>
<div class="row alt" style="top:194.8px"><div class="vh">80</div><div class="c1">80</div><div class="c2">Binh</div><div class="c3">1</div><div class="c4"></div></div>
<div class="row " style="top:224.8px"><div class="vh">81</div><div class="c1">81</div><div class="c2">Binh</div><div class="c3">1</div><div class="c4"></div></div>
<div class="row alt" style="top:254.8px"><div class="vh">82</div><div class="c1">82</div><div class="c2">Binh</div><div class="c3">1</div><div class="c4"></div></div>
<div class="row " style="top:284.8px"><div class="vh">83</div><div class="c1">83</div><div class="c2">Binh</div><div class="c3">3</div><div class="c4"></div></div>
<div class="row alt" style="top:314.8px"><div class="vh">84</div><div class="c1">84</div><div class="c2">Binh</div><div class="c3">1</div><div class="c4"></div></div>
<div class="row " style="top:344.8px"><div class="vh">85</div><div class="c1">85</div><div class="c2">Binh</div><div class="c3">3</div><div class="c4"></div></div>
<div class="row alt" style="top:374.8px"><div class="vh">86</div><div class="c1">86</div><div class="c2">Binh</div><div class="c3">1</div><div class="c4"></div></div>
<div class="row " style="top:404.8px"><div class="vh">87</div><div class="c1">87</div><div class="c2">Binh</div><div class="c3">1</div><div class="c4"></div></div>
<div class="row alt" style="top:434.8px"><div class="vh">88</div><div class="c1">88</div><div class="c2">Binh</div><div class="c3">1</div><div class="c4"></div></div>
    <div id="vscroll"><div id="vup"></div><div id="vthumb"></div><div id="vdown"></div></div>
    <div id="hscroll"><div id="hleft"></div><div id="hthumb"></div><div id="hright"></div><div id="hcorner"></div></div>
  </div>
  <div class="btn" style="left:4px;top:575px;width:119px;height:23px;text-align:left;padding:4px 0 0 19px">Show All Features</div>
</div>
</body></html>
